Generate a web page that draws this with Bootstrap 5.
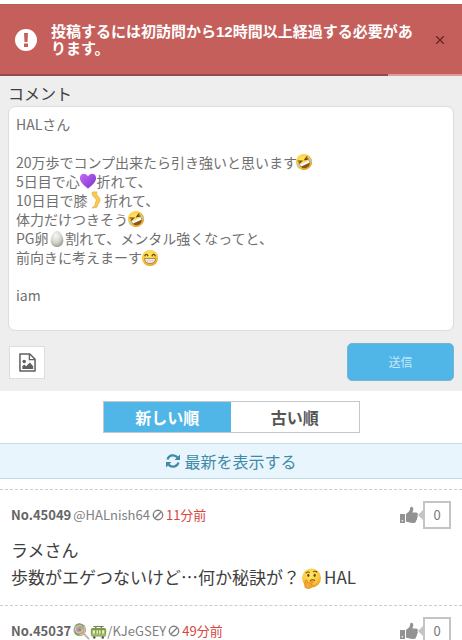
<!DOCTYPE html>
<html lang="ja">
<head>
<meta charset="utf-8">
<meta name="viewport" content="width=device-width, initial-scale=1">
<title>コメント</title>
<link rel="stylesheet" href="https://cdn.jsdelivr.net/npm/bootstrap@5.3.0/dist/css/bootstrap.min.css">
<style>
body { font-family: "Noto Sans CJK JP", sans-serif; color: #404040; background: #fff; overflow-x: hidden; }
.notice { margin-top: 4px; background: #c45f5b; color: #fff; font: bold 15px/17px "Liberation Sans", "Noto Sans CJK JP", sans-serif; border-top: 1px solid #b85c58; }
.notice-row { height: 69px; padding: 0 16px 0 15px; gap: 14px; }
.notice-close { width: 12px; height: 34px; margin-left: auto; color: #6b2422; }
.notice .progress { height: 2px; background: #e09b98; }
.notice .progress-bar { width: 84%; background: #94494c; }
.composer { background: #eee; padding: 6px 8px 10px; }
.composer label { font-size: 16px; line-height: 22px; margin-bottom: 2px; }
.composer textarea.form-control { display: block; height: 225px; padding: 8px 7px; font-size: 14px; line-height: 19px; color: #707070; border: 1px solid #ddd; border-radius: 7px; resize: none; overflow: hidden; }
.emo { width: 18px; height: 18px; flex: none; }
.over { position: absolute; pointer-events: none; }
.o1 { left: 287px; top: 47px; }
.o2 { left: 71px; top: 66px; }
.o3 { left: 79px; top: 85px; }
.o4 { left: 119px; top: 104px; }
.o5 { left: 40px; top: 124px; }
.o6 { left: 133px; top: 143px; }
.composer-actions { margin-top: 12px; }
.btn-image { width: 36px; height: 33px; margin-left: 1px; background: #fff; border: 1px solid #ddd; border-radius: 0; color: #606060; }
.btn-send, .btn-send:hover { width: 107px; height: 38px; background: #50b5e7; border: 1px solid #79b4d3; border-radius: 5px; color: #c5e9fa; font-size: 12px; }
.sorts { width: 257px; height: 32px; margin: 10px auto; border: 1px solid #c4c8ca; }
.sorts .btn { border: 0; border-radius: 0; font-size: 16px; line-height: 30px; font-weight: bold; color: #555; }
.sorts .btn.active { background: #50b5e7; color: #fff; }
.reload { height: 36px; background: #e8f5fd; border: solid #bfdde8; border-width: 1px 0; color: #3f8aa8; font-size: 16px; gap: 3px; text-decoration: none; }
.posts { margin-top: 10px; }
.post { border-top: 1px dashed #ccc; height: 116px; padding: 11px 11px 0; }
.post-meta { font-size: 13px; line-height: 28px; color: #808080; gap: 2px; white-space: nowrap; }
.post-no { color: #666; }
.post-time { color: #d6453e; }
.post-meta .user { color: inherit; text-decoration: none; }
.post-body { font-size: 17px; line-height: 27px; margin: 7px 0 0; color: #404040; }
.post-body .emo { width: 21px; height: 21px; margin: 0 2px 2px 1px; }
.like { border: 0; background: none; padding: 0; color: #929292; }
.like-count { width: 28px; height: 28px; border: 2px solid #c4c4c4; line-height: 24px; text-align: center; color: #777; background: #fff; }
.like-tip { width: 0; height: 0; border: solid transparent; border-width: 5px 5px 5px 0; border-right-color: #c4c4c4; }
</style>
<script src="https://cdn.jsdelivr.net/npm/bootstrap@5.3.0/dist/js/bootstrap.bundle.min.js"></script>
</head>
<body>
<svg width="0" height="0" class="position-absolute" aria-hidden="true">
  <defs>
    <radialGradient id="gold" cx=".45" cy=".35" r=".7"><stop offset="0" stop-color="#ffe968"/><stop offset=".65" stop-color="#fbc83c"/><stop offset="1" stop-color="#df8f1e"/></radialGradient>
    <linearGradient id="violet" x2="1" y2="1"><stop offset="0" stop-color="#c46bf2"/><stop offset="1" stop-color="#7933cf"/></linearGradient>
    <radialGradient id="shell" cx=".4" cy=".3" r=".75"><stop offset="0" stop-color="#f8f8f2"/><stop offset=".6" stop-color="#d2d1c7"/><stop offset="1" stop-color="#96958c"/></radialGradient>
  </defs>
  <symbol id="e-rofl" viewBox="0 0 20 20"><g transform="rotate(-25 10 10)"><circle cx="10" cy="10" r="9" fill="url(#gold)"/><path d="M4 6l4 2-4 1M16 6l-4 2 4 1" fill="none" stroke="#714414" stroke-width="1.3"/><path d="M4 10.500h12q-.5 6.500-6 6.500t-6-6.500z" fill="#8a5518"/><path d="M4.500 10.500h11l-.5 2.800H5z" fill="#fff"/><path d="M3 9q-3 3-1.500 4t2.500-2.500zM17 9q3 3 1.500 4t-2.500-2.500z" fill="#9fd0d8"/></g></symbol>
  <symbol id="e-heart" viewBox="0 0 20 20"><path d="M10 18.500C4 14 1 10.500 1 6.500 1 1.500 7.500 0 10 5c2.500-5 9-3.500 9 1.500 0 4-3 7.500-9 12z" fill="url(#violet)"/></symbol>
  <symbol id="e-leg" viewBox="0 0 20 20"><path d="M6 1l5 0c-1 3 1 4 3 7 1 2 0 5-2 7l-1 3-5 1c0-2 3-2 3-4 0-3 2-4 1-6C7 6 5 5 6 1z" fill="#f7cb50" stroke="#dfa63b" stroke-width=".7"/></symbol>
  <symbol id="e-egg" viewBox="0 0 20 20"><path d="M10 1c4 0 7 6 7 10.500S14 19 10 19s-7-3-7-7.500S6 1 10 1z" fill="url(#shell)"/></symbol>
  <symbol id="e-grin" viewBox="0 0 20 20"><circle cx="10" cy="10" r="9" fill="url(#gold)"/><path d="M4 8q2-4 4 0M12 8q2-4 4 0" fill="none" stroke="#6d4514" stroke-width="1.400"/><path d="M4 10.500h12q0 5.500-6 5.500t-6-5.500z" fill="#fff" stroke="#8f5b1d" stroke-width=".8"/><path d="M4.300 13h11.400M7.500 10.500v5M10 10.500v5.500M12.500 10.500v5" stroke="#b6aa96" stroke-width=".5"/></symbol>
  <symbol id="e-think" viewBox="0 0 20 20"><circle cx="10" cy="9.500" r="9" fill="url(#gold)"/><ellipse cx="7" cy="7" rx="1" ry="1.500" fill="#6b3b12"/><ellipse cx="13" cy="7" rx="1" ry="1.500" fill="#6b3b12"/><path d="M4.500 5q2-2 4-.8M11.500 3.500q2.500-1.200 4 .7M8.500 11.800q3-1.200 5 .2" fill="none" stroke="#7b4717" stroke-width="1"/><path d="M4 12q1-2 2 0v2l5-1.500q1.500.3.5 1.500l-2.500 1q2.500.3 1.500 2.500-1.500 2.500-4.500 2T3.500 16z" fill="#f6a72e" stroke="#d5801c" stroke-width=".6"/></symbol>
  <symbol id="e-lolly" viewBox="0 0 20 20"><path d="M12 12l7 7" stroke="#b7b3a9" stroke-width="2"/><circle cx="8" cy="8" r="7.500" fill="#a9a1b5"/><path d="M8 8q2-2 3 0t-3 3-5-3 5-5 6 5-6 6" fill="none" stroke="#e6cd68" stroke-width="1.300"/><path d="M3 3q5-4 10 1M2 10q1 4 5 4" fill="none" stroke="#75a96a" stroke-width="1.500"/><circle cx="8" cy="8" r="1.500" fill="#ad6ba2"/></symbol>
  <symbol id="e-train" viewBox="0 0 20 20"><path d="M6 6l2-2h4l2 2M4 4h12" fill="none" stroke="#767c55" stroke-width="1.200"/><rect x="1" y="6" width="18" height="10" rx="2" fill="#7d9b45"/><path d="M3 8.500h3v4H3zM14 8.500h3v4h-3zM7.500 8.500h2v4h-2zM10.500 8.500h2v4h-2z" fill="#e4ebc5"/><path d="M1 14h18" stroke="#d4d69b"/><circle cx="5" cy="17" r="1.500" fill="#545849"/><circle cx="15" cy="17" r="1.500" fill="#545849"/></symbol>
  <symbol id="i-ban" viewBox="0 0 12 12"><circle cx="6" cy="6" r="4.700" fill="none" stroke="currentColor" stroke-width="1.400"/><path d="M2.800 9.200l6.400-6.400" stroke="currentColor" stroke-width="1.400"/></symbol>
  <symbol id="i-thumb" viewBox="0 0 18 18"><path d="M0 8h5v9H0z"/><path d="M6 8l3-2.500c1-1.500 1-2.500 1.300-4 .2-1.500 3-1 3 1.500 0 1.600-.7 2.500-.9 3.500H16c2 0 2.300 2 1.300 3 .8 1 .5 2-.4 2.700.4 1 0 2-.9 2.500 0 1.500-.8 2.300-2.700 2.300-3 0-4.500-.8-7.300-1.200z"/><circle cx="2.300" cy="14.800" r=".8" fill="#fff"/></symbol>
</svg>

<div class="notice" role="alert">
  <div class="notice-row d-flex align-items-center">
    <svg class="flex-shrink-0" width="22" height="22" viewBox="0 0 22 22" aria-hidden="true"><circle cx="11" cy="11" r="11" fill="#fff"/><path d="M9 4h4l-.5 9h-3zM9 14.500h4V18H9z" fill="#c45f5b"/></svg>
    <div>投稿するには初訪問から12時間以上経過する必要があります。</div>
    <button type="button" class="notice-close btn p-0 border-0 flex-shrink-0 d-flex align-items-center justify-content-center" aria-label="閉じる"><svg width="8" height="8" viewBox="0 0 8 8"><path d="M0 0l8 8M8 0L0 8" stroke="currentColor" stroke-width="1.300"/></svg></button>
  </div>
  <div class="progress rounded-0"><div class="progress-bar"></div></div>
</div>

<form class="composer">
  <label class="d-block" for="comment">コメント</label>
  <div class="position-relative">
    <textarea class="form-control" id="comment">HALさん

20万歩でコンプ出来たら引き強いと思います
5日目で心&emsp;&thinsp;折れて、
10日目で膝&emsp;&thinsp;折れて、
体力だけつきそう
PG卵&emsp;&thinsp;割れて、メンタル強くなってと、
前向きに考えまーす

iam</textarea>
    <svg class="emo over o1"><use href="#e-rofl"/></svg>
    <svg class="emo over o2"><use href="#e-heart"/></svg>
    <svg class="emo over o3"><use href="#e-leg"/></svg>
    <svg class="emo over o4"><use href="#e-rofl"/></svg>
    <svg class="emo over o5"><use href="#e-egg"/></svg>
    <svg class="emo over o6"><use href="#e-grin"/></svg>
  </div>
  <div class="composer-actions d-flex justify-content-between align-items-center">
    <button type="button" class="btn btn-image p-0 d-flex align-items-center justify-content-center" aria-label="画像"><svg width="17" height="19" viewBox="0 0 18 20"><path d="M1 1h10.500L17 6.500V19H1z" fill="none" stroke="currentColor" stroke-width="1.600" stroke-linejoin="round"/><path d="M11 1v6h6" fill="none" stroke="currentColor" stroke-width="1.400"/><circle cx="5.500" cy="9" r="1.900" fill="currentColor"/><path d="M3.500 17v-3l2-2 2 2 4-4 3.500 4v3z" fill="currentColor"/></svg></button>
    <button type="submit" class="btn btn-send p-0">送信</button>
  </div>
</form>

<div class="sorts d-flex">
  <button type="button" class="btn active flex-fill w-50 p-0">新しい順</button>
  <button type="button" class="btn flex-fill w-50 p-0">古い順</button>
</div>
<a href="#" class="reload d-flex align-items-center justify-content-center"><svg width="16" height="16" viewBox="0 0 16 16" aria-hidden="true"><path d="M2.500 6.500a5.700 5.700 0 0 1 10-2M13.500 9.500a5.700 5.700 0 0 1-10 2" fill="none" stroke="currentColor" stroke-width="2.200"/><path d="M15 1.500v5.500H9.500zM1 14.500V9h5.500z" fill="currentColor"/></svg>最新を表示する</a>

<main class="posts">
  <article class="post">
    <div class="post-meta d-flex align-items-center">
      <b class="post-no">No.45049</b>
      <a class="user" href="#">@HALnish64</a>
      <svg width="12" height="12" aria-hidden="true"><use href="#i-ban"/></svg>
      <span class="post-time">11分前</span>
      <button type="button" class="like d-flex align-items-center ms-auto" aria-label="いいね 0"><svg width="18" height="18" fill="currentColor"><use href="#i-thumb"/></svg><span class="like-tip"></span><span class="like-count">0</span></button>
    </div>
    <p class="post-body">ラメさん<br>歩数がエゲつないけど…何か秘訣が？<svg class="emo"><use href="#e-think"/></svg>HAL</p>
  </article>
  <article class="post">
    <div class="post-meta d-flex align-items-center">
      <b class="post-no">No.45037</b>
      <a class="user d-flex align-items-center" href="#"><svg width="17" height="17"><use href="#e-lolly"/></svg><svg width="17" height="17"><use href="#e-train"/></svg>/KJeGSEY</a>
      <svg width="12" height="12" aria-hidden="true"><use href="#i-ban"/></svg>
      <span class="post-time">49分前</span>
      <button type="button" class="like d-flex align-items-center ms-auto" aria-label="いいね 0"><svg width="18" height="18" fill="currentColor"><use href="#i-thumb"/></svg><span class="like-tip"></span><span class="like-count">0</span></button>
    </div>
  </article>
</main>
</body>
</html>
